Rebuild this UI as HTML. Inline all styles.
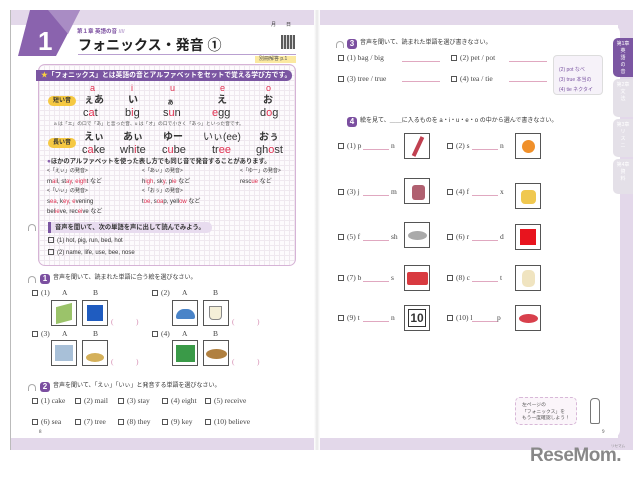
<!DOCTYPE html>
<html><head><meta charset="utf-8">
<style>
*{margin:0;padding:0;box-sizing:border-box}
body{width:640px;height:479px;background:#fff;position:relative;overflow:hidden;font-family:"Liberation Sans","Noto Sans CJK JP",sans-serif;color:#333;line-height:1.15}
.a{position:absolute;white-space:nowrap}
.s{font-family:"Liberation Serif","Noto Serif CJK SC",serif;font-size:7.5px;color:#444}
.j{font-size:6.5px;color:#333}
.r{color:#e03050}
.v{font-size:10px;font-weight:bold;color:#333;line-height:1}
.img{position:absolute;width:26px;height:26px;border:1.2px solid #555;background:#fff}
.bl{position:absolute;border-bottom:1px solid #e0a8c0;height:1px}
.cb{display:inline-block;width:6px;height:6px;border:0.8px solid #555;margin-right:3px;vertical-align:-1px}
.num{position:absolute;width:10px;height:10px;border-radius:3px;background:#7b4fa0;color:#fff;font-size:8px;font-weight:bold;text-align:center;line-height:10px}
.hp{position:absolute;width:8px;height:7px;border:1.3px solid #aaa;border-bottom:none;border-radius:5px 5px 0 0}
.tab{position:absolute;left:613px;width:20px;border-radius:5px 0 0 5px;background:#e4e0e8;color:#fff;font-size:5px;text-align:center;padding-top:3px;line-height:7px}
</style></head><body>
<div class="a" style="left:10px;top:10px;width:623px;height:15px;background:#e3d8ea"></div>
<div class="a" style="left:10px;top:438px;width:623px;height:12px;background:#e3d8ea"></div>
<div class="a" style="left:10px;top:10px;width:1px;height:440px;background:#bbb"></div>
<div class="a" style="left:618px;top:10px;width:15px;height:440px;background:#e3d8ea"></div>
<div class="a" style="left:320px;top:25px;width:300px;height:413px;background:#fff;border-radius:0 8px 8px 0"></div>
<div class="a" style="left:314px;top:10px;width:6px;height:440px;background:linear-gradient(90deg,#fff,#e8e8e8,#fff)"></div>
<svg class="a" style="left:18px;top:10px" width="70" height="46"><polygon points="12,0 62,0 38,46 0,46" fill="#8a63ae"/><polygon points="30,0 62,0 50,24" fill="#a98cc4"/><text x="20" y="40" font-size="26" font-weight="bold" fill="#fff" font-family="Liberation Sans">1</text></svg>
<div class="a" style="left:77px;top:29px;font-size:5.5px;font-weight:bold;color:#7b4fa0">第１章 英語の音 <span style="color:#b9a0d0">////</span></div>
<div class="a" style="left:78px;top:37px;font-size:14px;font-weight:bold;color:#222">フォニックス・発音 ①</div>
<div class="a" style="left:78px;top:54px;width:218px;height:1px;background:#b9a0d0"></div>
<div class="a j" style="left:271px;top:23px;font-size:5px">月　　日</div>
<div class="a" style="left:281px;top:35px;width:14px;height:14px;background:repeating-linear-gradient(90deg,#333 0 2px,#ccc 2px 3px),#333;opacity:.8"></div>
<div class="a" style="left:255px;top:56px;width:41px;height:7px;background:#fbe9a0;font-size:5px;line-height:7px;padding-left:4px;color:#555">別冊解答 p.1</div>
<div class="a" style="left:38px;top:64px;width:258px;height:202px;border:1.5px solid #d6b3d6;border-radius:7px;background-color:#fdfbfd;background-image:linear-gradient(#efe8ef 1px,transparent 1px),linear-gradient(90deg,#efe8ef 1px,transparent 1px);background-size:5px 5px"></div>
<div class="a" style="left:36px;top:70px;width:256px;height:11px;background:#7b56a2;border-radius:0 5px 5px 0;color:#fff;font-size:6.8px;font-weight:bold;line-height:11px;padding-left:5px;overflow:hidden"><span style="color:#f8d040">★</span>「フォニックス」とは英語の音とアルファベットをセットで覚える学び方です。</div>
<div class="a r" style="left:90px;top:84px;font-size:9px;line-height:1">a</div>
<div class="a r" style="left:131px;top:84px;font-size:9px;line-height:1">i</div>
<div class="a r" style="left:170px;top:84px;font-size:9px;line-height:1">u</div>
<div class="a r" style="left:220px;top:84px;font-size:9px;line-height:1">e</div>
<div class="a r" style="left:266px;top:84px;font-size:9px;line-height:1">o</div>
<div class="a" style="left:48px;top:96px;width:28px;height:10px;background:#f5c842;border-radius:5px;font-size:6px;font-weight:bold;text-align:center;line-height:10px">短い音</div>
<div class="a v" style="left:84px;top:96px">ぇあ</div>
<div class="a v" style="left:128px;top:96px">い</div>
<div class="a v" style="left:167px;top:99px;font-size:7px">ぁ</div>
<div class="a v" style="left:217px;top:96px">え</div>
<div class="a v" style="left:263px;top:96px">お</div>
<div class="a v" style="left:83px;top:108px;font-weight:normal;font-size:11px">c<span class="r">a</span>t</div>
<div class="a v" style="left:125px;top:108px;font-weight:normal;font-size:11px">b<span class="r">i</span>g</div>
<div class="a v" style="left:163px;top:108px;font-weight:normal;font-size:11px">s<span class="r">u</span>n</div>
<div class="a v" style="left:212px;top:108px;font-weight:normal;font-size:11px"><span class="r">e</span>gg</div>
<div class="a v" style="left:260px;top:108px;font-weight:normal;font-size:11px">d<span class="r">o</span>g</div>
<div class="a" style="left:54px;top:122px;font-size:4.8px;color:#555">a は「エ」の口で「あ」と言った音、u は「オ」の口で小さく「あっ」といった音です。</div>
<div class="a" style="left:48px;top:138px;width:28px;height:10px;background:#f5c842;border-radius:5px;font-size:6px;font-weight:bold;text-align:center;line-height:10px">長い音</div>
<div class="a v" style="left:84px;top:133px">えぃ</div>
<div class="a v" style="left:123px;top:133px">あぃ</div>
<div class="a v" style="left:163px;top:133px">ゆー</div>
<div class="a v" style="left:203px;top:133px;font-weight:normal">いぃ(ee)</div>
<div class="a v" style="left:259px;top:133px">おぅ</div>
<div class="a v" style="left:82px;top:145px;font-weight:normal;font-size:11px">c<span class="r">a</span>ke</div>
<div class="a v" style="left:120px;top:145px;font-weight:normal;font-size:11px">wh<span class="r">i</span>te</div>
<div class="a v" style="left:162px;top:145px;font-weight:normal;font-size:11px">c<span class="r">u</span>be</div>
<div class="a v" style="left:212px;top:145px;font-weight:normal;font-size:11px">tr<span class="r">ee</span></div>
<div class="a v" style="left:256px;top:145px;font-weight:normal;font-size:11px">gh<span class="r">o</span>st</div>
<div class="a" style="left:47px;top:158px;font-size:6.3px;font-weight:bold;color:#333"><span style="color:#8a63ae">●</span>ほかのアルファベットを使った表し方でも同じ音で発音することがあります。</div>
<div class="a j" style="left:47px;top:169px;font-size:5px">&lt;「えぃ」の発音&gt;</div>
<div class="a j" style="left:142px;top:169px;font-size:5px">&lt;「あぃ」の発音&gt;</div>
<div class="a j" style="left:240px;top:169px;font-size:5px">&lt;「ゆー」の発音&gt;</div>
<div class="a j" style="left:47px;top:179px;font-size:6px">m<span class="r">ai</span>l, st<span class="r">ay</span>, <span class="r">eigh</span>t など</div>
<div class="a j" style="left:142px;top:179px;font-size:6px">h<span class="r">igh</span>, sk<span class="r">y</span>, p<span class="r">ie</span> など</div>
<div class="a j" style="left:240px;top:179px;font-size:6px">resc<span class="r">ue</span> など</div>
<div class="a j" style="left:47px;top:189px;font-size:5px">&lt;「いぃ」の発音&gt;</div>
<div class="a j" style="left:142px;top:189px;font-size:5px">&lt;「おぅ」の発音&gt;</div>
<div class="a j" style="left:47px;top:199px;font-size:6px">s<span class="r">ea</span>, k<span class="r">ey</span>, <span class="r">e</span>vening</div>
<div class="a j" style="left:142px;top:199px;font-size:6px">t<span class="r">oe</span>, s<span class="r">oa</span>p, yell<span class="r">ow</span> など</div>
<div class="a j" style="left:47px;top:209px;font-size:6px">bel<span class="r">ie</span>ve, rec<span class="r">ei</span>ve など</div>
<div class="hp" style="left:28px;top:224px"></div>
<div class="a" style="left:48px;top:222px;width:164px;height:11px;background:#e8dcef;border-left:3px solid #7b56a2;border-radius:0 5px 5px 0;font-size:6.3px;font-weight:bold;line-height:11px;padding-left:4px">音声を聞いて、次の単語を声に出して読んでみよう。</div>
<div class="a j" style="left:48px;top:237px;font-size:6px"><span class="cb"></span>(1) hot, pig, run, bed, hot</div>
<div class="a j" style="left:48px;top:249px;font-size:6px"><span class="cb"></span>(2) name, life, use, bee, nose</div>
<div class="hp" style="left:28px;top:276px"></div>
<div class="num" style="left:40px;top:274px">1</div>
<div class="a j" style="left:53px;top:275px;font-size:6px">音声を聞いて、読まれた単語に合う絵を選びなさい。</div>
<div class="a s" style="left:32px;top:289px"><span class="cb"></span>(1)</div>
<div class="a s" style="left:62px;top:289px">A</div><div class="a s" style="left:93px;top:289px">B</div>
<div class="a s" style="left:152px;top:289px"><span class="cb"></span>(2)</div>
<div class="a s" style="left:182px;top:289px">A</div><div class="a s" style="left:213px;top:289px">B</div>
<div class="img" style="left:51px;top:300px"><div class="a" style="left:4px;top:4px;width:16px;height:17px;background:#9bc36a;transform:skewY(-15deg)"></div></div>
<div class="img" style="left:82px;top:300px"><div class="a" style="left:4px;top:4px;width:16px;height:16px;background:#1f5cc0"></div></div>
<div class="a s" style="left:111px;top:318px;color:#d48ab0">(　　　)</div>
<div class="img" style="left:172px;top:300px"><div class="a" style="left:3px;top:8px;width:19px;height:10px;background:#4a84c8;border-radius:8px 8px 2px 2px"></div></div>
<div class="img" style="left:203px;top:300px"><div class="a" style="left:5px;top:5px;width:13px;height:14px;background:#f4efd8;border:1px solid #888;border-radius:0 0 4px 4px"></div></div>
<div class="a s" style="left:232px;top:318px;color:#d48ab0">(　　　)</div>
<div class="a s" style="left:32px;top:330px"><span class="cb"></span>(3)</div>
<div class="a s" style="left:62px;top:330px">A</div><div class="a s" style="left:93px;top:330px">B</div>
<div class="a s" style="left:152px;top:330px"><span class="cb"></span>(4)</div>
<div class="a s" style="left:182px;top:330px">A</div><div class="a s" style="left:213px;top:330px">B</div>
<div class="img" style="left:51px;top:340px"><div class="a" style="left:3px;top:4px;width:18px;height:16px;background:#a8c0d8"></div></div>
<div class="img" style="left:82px;top:340px"><div class="a" style="left:3px;top:12px;width:18px;height:9px;background:#d4b05a;border-radius:50%"></div></div>
<div class="a s" style="left:111px;top:358px;color:#d48ab0">(　　　)</div>
<div class="img" style="left:172px;top:340px"><div class="a" style="left:3px;top:4px;width:19px;height:17px;background:#3a9a48"></div></div>
<div class="img" style="left:203px;top:340px"><div class="a" style="left:2px;top:8px;width:21px;height:10px;background:#b08040;border-radius:50%"></div></div>
<div class="a s" style="left:232px;top:358px;color:#d48ab0">(　　　)</div>
<div class="hp" style="left:28px;top:384px"></div>
<div class="num" style="left:40px;top:382px">2</div>
<div class="a j" style="left:53px;top:383px;font-size:6px">音声を聞いて、「えぃ」「いぃ」と発音する単語を選びなさい。</div>
<div class="a s" style="left:32px;top:397px"><span class="cb"></span>(1) cake</div>
<div class="a s" style="left:75px;top:397px"><span class="cb"></span>(2) mail</div>
<div class="a s" style="left:118px;top:397px"><span class="cb"></span>(3) stay</div>
<div class="a s" style="left:162px;top:397px"><span class="cb"></span>(4) eight</div>
<div class="a s" style="left:205px;top:397px"><span class="cb"></span>(5) receive</div>
<div class="a s" style="left:32px;top:418px"><span class="cb"></span>(6) sea</div>
<div class="a s" style="left:75px;top:418px"><span class="cb"></span>(7) tree</div>
<div class="a s" style="left:118px;top:418px"><span class="cb"></span>(8) they</div>
<div class="a s" style="left:162px;top:418px"><span class="cb"></span>(9) key</div>
<div class="a s" style="left:205px;top:418px"><span class="cb"></span>(10) believe</div>
<div class="a s" style="left:39px;top:430px;font-size:5px">8</div>
<div class="tab" style="top:38px;height:39px;background:#7b56a2">第1章<br>英<br>語<br>の<br>音</div>
<div class="tab" style="top:79px;height:38px">第2章<br>文<br>法</div>
<div class="tab" style="top:119px;height:38px">第3章<br>リ<br>ス<br>ニ</div>
<div class="tab" style="top:159px;height:35px">第4章<br>資<br>料</div>
<div class="hp" style="left:336px;top:41px"></div>
<div class="num" style="left:347px;top:39px">3</div>
<div class="a j" style="left:360px;top:40px;font-size:6px">音声を聞いて、読まれた単語を選び書きなさい。</div>
<div class="a s" style="left:338px;top:54px"><span class="cb"></span>(1) bag / big</div>
<div class="bl" style="left:402px;top:61px;width:38px"></div>
<div class="a s" style="left:451px;top:54px"><span class="cb"></span>(2) pet / pot</div>
<div class="bl" style="left:509px;top:61px;width:38px"></div>
<div class="a s" style="left:338px;top:75px"><span class="cb"></span>(3) tree / true</div>
<div class="bl" style="left:402px;top:81px;width:38px"></div>
<div class="a s" style="left:451px;top:75px"><span class="cb"></span>(4) tea / tie</div>
<div class="bl" style="left:509px;top:81px;width:38px"></div>
<div class="a" style="left:553px;top:55px;width:50px;height:40px;background:#f6f2f9;border:1px solid #ddd;border-radius:4px;font-size:5px;color:#7b56a2;line-height:10px;padding:9px 0 0 5px">(2) pot なべ<br>(3) true 本当の<br>(4) tie ネクタイ</div>
<div class="num" style="left:347px;top:117px">4</div>
<div class="a j" style="left:360px;top:118px;font-size:6px">絵を見て、＿＿に入るものを a・i・u・e・o の中から選んで書きなさい。</div>
<div class="a s" style="left:338px;top:142px"><span class="cb"></span>(1) p</div><div class="bl" style="left:363px;top:149px;width:26px"></div><div class="a s" style="left:391px;top:142px">n</div>
<div class="img" style="left:404px;top:133px"><div class="a" style="left:11px;top:2px;width:4px;height:21px;background:#c04050;transform:rotate(25deg)"></div></div>
<div class="a s" style="left:447px;top:142px"><span class="cb"></span>(2) s</div><div class="bl" style="left:472px;top:149px;width:26px"></div><div class="a s" style="left:500px;top:142px">n</div>
<div class="img" style="left:515px;top:133px"><div class="a" style="left:6px;top:6px;width:13px;height:13px;background:#f0902a;border-radius:50%"></div></div>
<div class="a s" style="left:338px;top:188px"><span class="cb"></span>(3) j</div><div class="bl" style="left:363px;top:195px;width:26px"></div><div class="a s" style="left:391px;top:188px">m</div>
<div class="img" style="left:404px;top:178px"><div class="a" style="left:7px;top:6px;width:13px;height:15px;background:#b06070;border-radius:3px"></div></div>
<div class="a s" style="left:447px;top:188px"><span class="cb"></span>(4) f</div><div class="bl" style="left:472px;top:195px;width:26px"></div><div class="a s" style="left:500px;top:188px">x</div>
<div class="img" style="left:515px;top:183px"><div class="a" style="left:5px;top:6px;width:15px;height:14px;background:#f0c850;border-radius:4px"></div></div>
<div class="a s" style="left:338px;top:233px"><span class="cb"></span>(5) f</div><div class="bl" style="left:363px;top:240px;width:26px"></div><div class="a s" style="left:391px;top:233px">sh</div>
<div class="img" style="left:404px;top:222px"><div class="a" style="left:3px;top:8px;width:19px;height:9px;background:#aaa;border-radius:50%"></div></div>
<div class="a s" style="left:447px;top:233px"><span class="cb"></span>(6) r</div><div class="bl" style="left:472px;top:240px;width:26px"></div><div class="a s" style="left:500px;top:233px">d</div>
<div class="img" style="left:515px;top:224px"><div class="a" style="left:4px;top:4px;width:16px;height:16px;background:#e8141e"></div></div>
<div class="a s" style="left:338px;top:274px"><span class="cb"></span>(7) b</div><div class="bl" style="left:363px;top:281px;width:26px"></div><div class="a s" style="left:391px;top:274px">s</div>
<div class="img" style="left:404px;top:265px"><div class="a" style="left:2px;top:6px;width:21px;height:13px;background:#d83a40;border-radius:2px"></div></div>
<div class="a s" style="left:447px;top:274px"><span class="cb"></span>(8) c</div><div class="bl" style="left:472px;top:281px;width:26px"></div><div class="a s" style="left:500px;top:274px">t</div>
<div class="img" style="left:515px;top:265px"><div class="a" style="left:6px;top:4px;width:13px;height:17px;background:#f0e4c0;border-radius:5px"></div></div>
<div class="a s" style="left:338px;top:314px"><span class="cb"></span>(9) t</div><div class="bl" style="left:363px;top:321px;width:26px"></div><div class="a s" style="left:391px;top:314px">n</div>
<div class="img" style="left:404px;top:305px"><div class="a" style="left:3px;top:3px;width:18px;height:18px;border:1px solid #333;font:bold 12px 'Liberation Sans';text-align:center;line-height:17px;color:#333">10</div></div>
<div class="a s" style="left:447px;top:314px"><span class="cb"></span>(10) l</div><div class="bl" style="left:472px;top:321px;width:26px"></div><div class="a s" style="left:497px;top:314px">p</div>
<div class="img" style="left:515px;top:305px"><div class="a" style="left:3px;top:8px;width:19px;height:9px;background:#d8404c;border-radius:50%"></div></div>
<div class="a" style="left:515px;top:397px;width:62px;height:28px;border:1px dashed #d8b8d8;background:#fbf5fa;border-radius:5px;font-size:4.8px;line-height:6.5px;padding:5px 0 0 6px;color:#555">左ページの<br>「フォニックス」を<br>もう一度確認しよう！</div>
<div class="a" style="left:590px;top:398px;width:10px;height:26px;border:1px solid #777;border-radius:4px 4px 2px 2px;background:#fff"></div>
<div class="a s" style="left:602px;top:430px;font-size:5px">9</div>
<div class="a" style="left:530px;top:446px;font-size:19px;font-weight:bold;color:#888;letter-spacing:-0.5px;line-height:1">ReseMom.</div>
<div class="a" style="left:611px;top:444px;font-size:3.5px;color:#888">リセマム</div>
</body></html>
